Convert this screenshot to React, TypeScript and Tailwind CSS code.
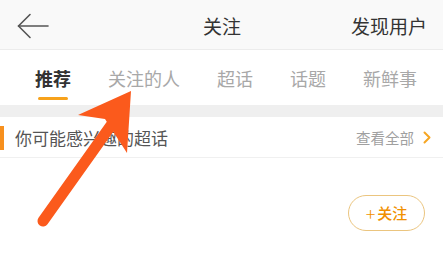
import React from 'react';

const tabs = ['推荐', '关注的人', '超话', '话题', '新鲜事'];

export default function App() {
  return (
    <div
      className="relative w-[443px] h-[270px] overflow-hidden bg-white"
      style={{ fontFamily: '"Noto Sans CJK SC", "Noto Sans", sans-serif' }}
    >
      {/* Header */}
      <div className="flex items-center h-[50px] bg-[#f9f9f9] border-b border-[#ececec] pl-[17px] pr-[16px] pt-[3px]">
        <div className="w-[120px] flex items-center">
          <svg width="32" height="26" viewBox="0 0 32 26" fill="none">
            <path d="M1.5 13H31" stroke="#555" strokeWidth="1.6" strokeLinecap="round" />
            <path d="M13 1.5L1.5 13L13 24.5" stroke="#555" strokeWidth="1.6" strokeLinecap="round" strokeLinejoin="round" />
          </svg>
        </div>
        <div className="flex-1 text-center text-[19px] text-[#333]">关注</div>
        <div className="w-[120px] text-right text-[19px] text-[#333]">发现用户</div>
      </div>

      {/* Tabs */}
      <div className="flex items-start gap-[37px] h-[55px] pl-[35px] pt-[15px]">
        {tabs.map((t, i) => (
          <div key={t} className="flex flex-col items-center">
            <span
              className={
                i === 0
                  ? 'text-[18px] leading-[26px] font-bold text-[#333]'
                  : 'text-[18px] leading-[26px] text-[#a8a8a8]'
              }
            >
              {t}
            </span>
            {i === 0 && <div className="mt-[6px] w-[30px] h-[3px] rounded-full bg-[#f7a21b]" />}
          </div>
        ))}
      </div>

      {/* Separator */}
      <div className="h-[12px] bg-[#efefef]" />

      {/* Section header */}
      <div className="flex items-center h-[41px] border-b border-[#f0f0f0] pr-[12px] pt-[1px]">
        <div className="w-[4px] h-[24px] bg-[#f7901e]" />
        <div className="flex-1 pl-[11px] text-[17px] text-[#555]">你可能感兴趣的超话</div>
        <span className="text-[14.5px] text-[#a0a0a0]">查看全部</span>
        <svg className="ml-[9px]" width="8" height="13" viewBox="0 0 8 13" fill="none">
          <path d="M1.5 1.5L6.5 6.5L1.5 11.5" stroke="#f6a623" strokeWidth="2" strokeLinecap="round" strokeLinejoin="round" />
        </svg>
      </div>

      {/* Card */}
      <div className="flex justify-end pt-[37px] pr-[18px]">
        <button className="flex items-center justify-center w-[77px] h-[36px] rounded-full border border-[#ebc57f] text-[15px] font-medium text-[#f19000]">
          <span className="text-[18px] mr-[2px] leading-none font-light">+</span>关注
        </button>
      </div>

      {/* Annotation arrow */}
      <svg className="absolute left-0 top-0 pointer-events-none" width="443" height="270" viewBox="0 0 443 270">
        <path d="M43 221L112 124" stroke="#fb5a1c" strokeWidth="11" strokeLinecap="round" />
        <path d="M131 91L78 115L105 119L127 153Z" fill="#fb5a1c" />
      </svg>
    </div>
  );
}
